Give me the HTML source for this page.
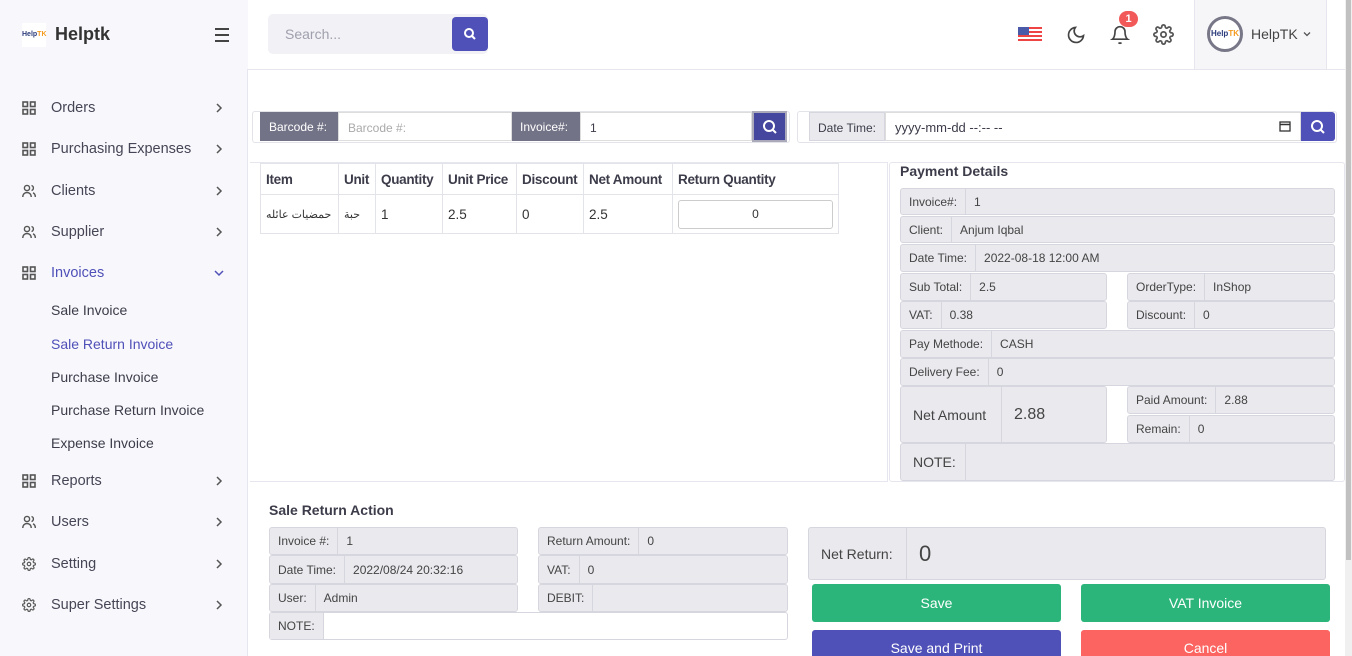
<!DOCTYPE html>
<html><head><meta charset="utf-8"><style>
*{box-sizing:border-box;margin:0;padding:0}
html,body{width:1352px;height:656px;overflow:hidden}
body{font-family:"Liberation Sans","Noto Sans CJK SC",sans-serif;background:#fff;color:#3c3c4a;position:relative;font-size:13px}
.abs{position:absolute}
.side{left:0;top:0;width:248px;height:656px;background:#f8f8fc;border-right:1px solid #e6e6ee}
.nav{position:absolute;left:22px;font-size:14.5px;color:#454556;display:flex;align-items:center;white-space:nowrap}
.nav .ic{width:14px;height:14px;margin-right:15px}
.chev{position:absolute;left:214px;width:10px;height:10px}
.sub{position:absolute;left:51px;font-size:14px;color:#3c3c4a;white-space:nowrap}
.box{position:absolute;background:#e9e9ee;border:1px solid #d6d6de;border-radius:3px;display:flex;align-items:center;font-size:12px;color:#444;white-space:nowrap}
.box span{padding:0 8px;height:100%;display:flex;align-items:center;border-right:1px solid #d6d6de}
.box b{font-weight:normal;padding:0 8px}
.btn{position:absolute;color:#fff;font-size:14px;display:flex;align-items:center;justify-content:center;border-radius:3px}
table{border-collapse:collapse;position:absolute;left:260px;top:163px;table-layout:fixed;width:578px}
td,th{border:1px solid #e3e3ea;padding:0 5px;font-size:13.5px;text-align:left;color:#333;white-space:nowrap;overflow:hidden}
th{height:31px;font-weight:bold;color:#3c3c4a;letter-spacing:-0.3px}
td{height:39px}
</style></head><body>
<div class="abs side"></div>
<div class="abs" style="left:0;top:0;width:248px;height:69px;background:#f8f8fc;z-index:2"></div>
<div class="abs" style="left:22px;top:23px;width:24px;height:24px;background:#fff;font-size:7px;font-weight:bold;color:#2a3a7a;text-align:center;line-height:24px;z-index:3">Help<span style="color:#f39a1e">TK</span></div>
<div class="abs" style="left:55px;top:24px;font-size:18px;font-weight:bold;color:#333;z-index:3">Helptk</div>
<div class="abs" style="left:215px;top:28px;width:14px;z-index:3"><div style="height:2px;background:#444;margin-bottom:4px"></div><div style="height:2px;background:#444;margin-bottom:4px"></div><div style="height:2px;background:#444"></div></div>
<div class="abs" style="left:248px;top:69px;width:1097px;height:1px;background:#e6e6ee"></div>

<svg width="0" height="0" style="position:absolute"><defs>
<symbol id="g" viewBox="0 0 14 14"><g fill="none" stroke="#555" stroke-width="1.6"><rect x="1" y="1" width="4.5" height="4.5"/><rect x="8.5" y="1" width="4.5" height="4.5"/><rect x="1" y="8.5" width="4.5" height="4.5"/><rect x="8.5" y="8.5" width="4.5" height="4.5"/></g></symbol>
<symbol id="u" viewBox="0 0 14 14"><g fill="none" stroke="#555" stroke-width="1.4"><circle cx="5" cy="4" r="2.6"/><path d="M0.8 13c0-3 2-4.5 4.2-4.5s4.2 1.5 4.2 4.5M9.5 1.5a2.6 2.6 0 010 5M11 8.8c1.4.6 2.3 2 2.3 4.2"/></g></symbol>
<symbol id="s" viewBox="0 0 24 24"><g fill="none" stroke="#555" stroke-width="2"><circle cx="12" cy="12" r="3"/><path d="M19.4 15a1.7 1.7 0 00.3 1.8l.1.1a2 2 0 11-2.8 2.8l-.1-.1a1.7 1.7 0 00-1.8-.3 1.7 1.7 0 00-1 1.5V21a2 2 0 11-4 0v-.1a1.7 1.7 0 00-1.1-1.5 1.7 1.7 0 00-1.8.3l-.1.1a2 2 0 11-2.8-2.8l.1-.1a1.7 1.7 0 00.3-1.8 1.7 1.7 0 00-1.5-1H3a2 2 0 110-4h.1a1.7 1.7 0 001.5-1.1 1.7 1.7 0 00-.3-1.8l-.1-.1a2 2 0 112.8-2.8l.1.1a1.7 1.7 0 001.8.3H9a1.7 1.7 0 001-1.5V3a2 2 0 114 0v.1a1.7 1.7 0 001 1.5 1.7 1.7 0 001.8-.3l.1-.1a2 2 0 112.8 2.8l-.1.1a1.7 1.7 0 00-.3 1.8V9a1.7 1.7 0 001.5 1H21a2 2 0 110 4h-.1a1.7 1.7 0 00-1.5 1z"/></g></symbol>
<symbol id="c" viewBox="0 0 10 10"><path d="M3 1l4 4-4 4" fill="none" stroke="#555" stroke-width="1.5"/></symbol>
<symbol id="cd" viewBox="0 0 10 10"><path d="M1 3l4 4 4-4" fill="none" stroke="#4f50b8" stroke-width="1.5"/></symbol>
</defs></svg>

<div class="nav" style="top:100px"><svg class="ic"><use href="#g"/></svg>Orders</div><svg class="chev" style="top:103px"><use href="#c"/></svg>
<div class="nav" style="top:141px"><svg class="ic"><use href="#g"/></svg>Purchasing Expenses</div><svg class="chev" style="top:144px"><use href="#c"/></svg>
<div class="nav" style="top:183px"><svg class="ic"><use href="#u"/></svg>Clients</div><svg class="chev" style="top:186px"><use href="#c"/></svg>
<div class="nav" style="top:224px"><svg class="ic"><use href="#u"/></svg>Supplier</div><svg class="chev" style="top:227px"><use href="#c"/></svg>
<div class="nav" style="top:265px;color:#4f50b8"><svg class="ic"><use href="#g"/></svg>Invoices</div><svg class="chev" style="top:268px"><use href="#cd"/></svg>
<div class="sub" style="top:302px">Sale Invoice</div>
<div class="sub" style="top:336px;color:#4f50b8">Sale Return Invoice</div>
<div class="sub" style="top:369px">Purchase Invoice</div>
<div class="sub" style="top:402px">Purchase Return Invoice</div>
<div class="sub" style="top:435px">Expense Invoice</div>
<div class="nav" style="top:473px"><svg class="ic"><use href="#g"/></svg>Reports</div><svg class="chev" style="top:476px"><use href="#c"/></svg>
<div class="nav" style="top:514px"><svg class="ic"><use href="#u"/></svg>Users</div><svg class="chev" style="top:517px"><use href="#c"/></svg>
<div class="nav" style="top:556px"><svg class="ic"><use href="#s"/></svg>Setting</div><svg class="chev" style="top:559px"><use href="#c"/></svg>
<div class="nav" style="top:597px"><svg class="ic"><use href="#s"/></svg>Super Settings</div><svg class="chev" style="top:600px"><use href="#c"/></svg>

<!-- topbar -->
<div class="abs" style="left:268px;top:14px;width:220px;height:40px;background:#f1f1f6;border-radius:5px;color:#a0a0ad;font-size:14px;padding:12px 17px">Search...</div>
<div class="abs" style="left:452px;top:17px;width:36px;height:34px;background:#4f50b8;border-radius:4px"><svg width="36" height="34"><circle cx="17" cy="16" r="4" fill="none" stroke="#fff" stroke-width="2"/><path d="M20 19l3 3" stroke="#fff" stroke-width="2"/></svg></div>
<div class="abs" style="left:1018px;top:27px;width:24px;height:16px;background:repeating-linear-gradient(#e44 0 2px,#fff 2px 4px)"><div style="width:11px;height:8px;background:#4a5aa8"></div></div>
<svg class="abs" style="left:1066px;top:25px" width="20" height="20" viewBox="0 0 24 24"><path d="M21 12.8A9 9 0 1111.2 3 7 7 0 0021 12.8z" fill="none" stroke="#444" stroke-width="2"/></svg>
<svg class="abs" style="left:1110px;top:24px" width="20" height="22" viewBox="0 0 24 24"><path d="M18 8a6 6 0 00-12 0c0 7-3 9-3 9h18s-3-2-3-9M13.7 21a2 2 0 01-3.4 0" fill="none" stroke="#444" stroke-width="2"/></svg>
<div class="abs" style="left:1119px;top:11px;width:19px;height:16px;background:#f25a5a;border-radius:8px;color:#fff;font-size:11px;font-weight:bold;text-align:center;line-height:16px">1</div>
<svg class="abs" style="left:1153px;top:24px" width="21" height="21"><use href="#s"/></svg>
<div class="abs" style="left:1194px;top:0;width:133px;height:69px;background:#f6f6f9;border-left:1px solid #e6e6ee;border-right:1px solid #e6e6ee"></div>
<div class="abs" style="left:1207px;top:16px;width:36px;height:36px;border-radius:50%;border:3px solid #777787;background:#fff;font-size:8px;font-weight:bold;color:#2a3a7a;text-align:center;line-height:30px">Help<span style="color:#f39a1e">TK</span></div>
<div class="abs" style="left:1251px;top:26px;font-size:14px;color:#444">HelpTK</div>
<svg class="abs" style="left:1303px;top:30px" width="8" height="8"><path d="M1 2.5l3 3 3-3" fill="none" stroke="#555" stroke-width="1.3"/></svg>
<div class="abs" style="left:1345px;top:0;width:7px;height:656px;background:#f0f0f0"></div>
<div class="abs" style="left:1346px;top:0;width:5px;height:560px;background:#c1c1c1"></div>

<!-- filter bar -->
<div class="abs" style="left:252px;top:111px;width:538px;height:32px;border:1px solid #e3e3ea;border-radius:3px"></div>
<div class="abs" style="left:260px;top:112px;width:78px;height:29px;background:#737387;color:#fff;font-size:12px;padding:8px 9px;white-space:nowrap">Barcode #:</div>
<div class="abs" style="left:338px;top:112px;width:174px;height:29px;border:1px solid #ddd;color:#aaa;font-size:12px;padding:8px 9px">Barcode #:</div>
<div class="abs" style="left:512px;top:112px;width:68px;height:29px;background:#737387;color:#fff;font-size:12px;padding:8px 8px;white-space:nowrap">Invoice#:</div>
<div class="abs" style="left:580px;top:112px;width:172px;height:29px;border:1px solid #ddd;font-size:12px;padding:8px 9px">1</div>
<div class="abs" style="left:752px;top:111px;width:35px;height:31px;background:#45469e;border:2px solid #aab"><svg width="31" height="27"><circle cx="15" cy="13" r="5" fill="none" stroke="#fff" stroke-width="2"/><path d="M19 17l3 3" stroke="#fff" stroke-width="2"/></svg></div>
<div class="abs" style="left:797px;top:111px;width:540px;height:32px;border:1px solid #e3e3ea;border-radius:3px"></div>
<div class="abs" style="left:809px;top:112px;width:76px;height:29px;background:#e9e9ee;border:1px solid #d6d6de;font-size:12px;padding:8px 8px;white-space:nowrap">Date Time:</div>
<div class="abs" style="left:885px;top:112px;width:416px;height:29px;border:1px solid #ddd;font-size:13px;padding:7px 9px">yyyy-mm-dd --:-- --</div>
<svg class="abs" style="left:1279px;top:120px" width="12" height="12"><rect x="1" y="2" width="10" height="9" fill="none" stroke="#333" stroke-width="1.3"/><path d="M1 4.5h10" stroke="#333" stroke-width="1.5"/></svg>
<div class="abs" style="left:1301px;top:112px;width:34px;height:29px;background:#4f50b8;border-radius:0 3px 3px 0"><svg width="34" height="29"><circle cx="16" cy="14" r="5" fill="none" stroke="#fff" stroke-width="2"/><path d="M20 18l3 3" stroke="#fff" stroke-width="2"/></svg></div>

<!-- table panel -->
<div class="abs" style="left:250px;top:162px;width:638px;height:320px;border:1px solid #e6e6ee;border-left:none"></div>
<table>
<colgroup><col style="width:78px"><col style="width:37px"><col style="width:67px"><col style="width:74px"><col style="width:67px"><col style="width:89px"><col style="width:166px"></colgroup>
<tr><th>Item</th><th>Unit</th><th>Quantity</th><th>Unit Price</th><th>Discount</th><th>Net Amount</th><th>Return Quantity</th></tr>
<tr><td style="font-size:11px">حمضيات عائله</td><td style="font-size:11px">حبة</td><td>1</td><td>2.5</td><td>0</td><td>2.5</td><td><div style="border:1px solid #ccc;border-radius:3px;height:29px;text-align:center;font-size:12px;line-height:27px">0</div></td></tr>
</table>

<!-- payment details -->
<div class="abs" style="left:889px;top:162px;width:456px;height:320px;border:1px solid #e6e6ee;border-radius:3px"></div>
<div class="abs" style="left:900px;top:163px;font-size:14px;font-weight:bold;color:#3c3c4a">Payment Details</div>
<div class="box" style="left:900px;top:188px;width:435px;height:27px"><span>Invoice#:</span><b>1</b></div>
<div class="box" style="left:900px;top:216px;width:435px;height:27px"><span>Client:</span><b>Anjum Iqbal</b></div>
<div class="box" style="left:900px;top:244px;width:435px;height:28px"><span>Date Time:</span><b>2022-08-18 12:00 AM</b></div>
<div class="box" style="left:900px;top:273px;width:207px;height:28px"><span>Sub Total:</span><b>2.5</b></div>
<div class="box" style="left:1127px;top:273px;width:208px;height:28px"><span>OrderType:</span><b>InShop</b></div>
<div class="box" style="left:900px;top:301px;width:207px;height:28px"><span>VAT:</span><b>0.38</b></div>
<div class="box" style="left:1127px;top:301px;width:208px;height:28px"><span>Discount:</span><b>0</b></div>
<div class="box" style="left:900px;top:330px;width:435px;height:28px"><span>Pay Methode:</span><b>CASH</b></div>
<div class="box" style="left:900px;top:358px;width:435px;height:28px"><span>Delivery Fee:</span><b>0</b></div>
<div class="box" style="left:900px;top:386px;width:207px;height:57px;font-size:14px"><span style="padding:0 12px;width:101px">Net Amount</span><b style="font-size:16px;padding:0 12px">2.88</b></div>
<div class="box" style="left:1127px;top:386px;width:208px;height:28px"><span>Paid Amount:</span><b>2.88</b></div>
<div class="box" style="left:1127px;top:415px;width:208px;height:28px"><span>Remain:</span><b>0</b></div>
<div class="box" style="left:900px;top:443px;width:435px;height:38px;font-size:14px"><span style="padding:0 12px;width:65px">NOTE:</span></div>

<!-- sale return action -->
<div class="abs" style="left:269px;top:502px;font-size:14px;font-weight:bold;color:#3c3c4a">Sale Return Action</div>
<div class="box" style="left:269px;top:527px;width:249px;height:28px"><span>Invoice #:</span><b>1</b></div>
<div class="box" style="left:269px;top:555px;width:249px;height:29px"><span>Date Time:</span><b>2022/08/24 20:32:16</b></div>
<div class="box" style="left:269px;top:584px;width:249px;height:28px"><span>User:</span><b>Admin</b></div>
<div class="box" style="left:538px;top:527px;width:250px;height:28px"><span>Return Amount:</span><b>0</b></div>
<div class="box" style="left:538px;top:555px;width:250px;height:29px"><span>VAT:</span><b>0</b></div>
<div class="box" style="left:538px;top:584px;width:250px;height:28px"><span>DEBIT:</span><b></b></div>
<div class="box" style="left:269px;top:612px;width:519px;height:28px;background:#fff"><span style="background:#e9e9ee">NOTE:</span></div>
<div class="box" style="left:808px;top:527px;width:518px;height:53px;font-size:14px"><span style="padding:0 12px;width:98px">Net Return:</span><b style="font-size:22px;padding:0 12px">0</b></div>
<div class="btn" style="left:812px;top:584px;width:249px;height:38px;background:#2bb57a">Save</div>
<div class="btn" style="left:1081px;top:584px;width:249px;height:38px;background:#2bb57a">VAT Invoice</div>
<div class="btn" style="left:812px;top:630px;width:249px;height:26px;background:#4f50b8;align-items:flex-start;padding-top:10px;border-radius:3px 3px 0 0">Save and Print</div>
<div class="btn" style="left:1081px;top:630px;width:249px;height:26px;background:#fb6460;align-items:flex-start;padding-top:10px;border-radius:3px 3px 0 0">Cancel</div>
</body></html>
